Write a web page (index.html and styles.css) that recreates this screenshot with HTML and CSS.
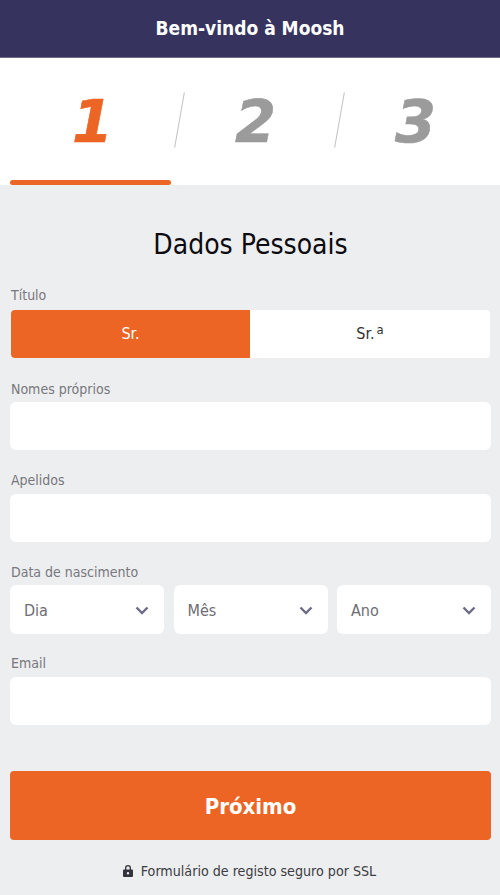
FILE: index.html
```html
<!DOCTYPE html>
<html lang="pt">
  <head>
    <meta charset="utf-8">
    <title>Moosh</title>
    <link rel="stylesheet" href="styles.css">
  </head>
  <body>
    <header class="topbar">Bem-vindo à Moosh</header>
    <nav class="steps">
      <div class="step active">1<span class="step-line"></span></div>
      <div class="step">2</div>
      <div class="step">3</div>
      <i class="slash slash-a"></i>
      <i class="slash slash-b"></i>
    </nav>
    <main class="form">
      <h1 class="form-title">Dados Pessoais</h1>
      <label class="label">Título</label>
      <div class="toggle">
        <div class="toggle-item on">Sr.</div>
        <div class="toggle-item">Sr.<sup>a</sup></div>
      </div>
      <label class="label label-name">Nomes próprios</label>
      <div class="input"></div>
      <label class="label">Apelidos</label>
      <div class="input"></div>
      <label class="label label-date">Data de nascimento</label>
      <div class="date-row">
        <div class="select">Dia
          <svg class="chev" width="14" height="9" viewBox="0 0 14 9"><path d="M1.5 1.5 7 7l5.5-5.5" fill="none" stroke="#6d6c86" stroke-width="2.4"/></svg>
        </div>
        <div class="select">Mês
          <svg class="chev" width="14" height="9" viewBox="0 0 14 9"><path d="M1.5 1.5 7 7l5.5-5.5" fill="none" stroke="#6d6c86" stroke-width="2.4"/></svg>
        </div>
        <div class="select">Ano
          <svg class="chev" width="14" height="9" viewBox="0 0 14 9"><path d="M1.5 1.5 7 7l5.5-5.5" fill="none" stroke="#6d6c86" stroke-width="2.4"/></svg>
        </div>
      </div>
      <label class="label label-email">Email</label>
      <div class="input"></div>
      <button class="next" type="button">Próximo</button>
      <p class="secure">
        <svg width="10" height="12" viewBox="0 0 10 12"><path d="M5 0a3 3 0 0 0-3 3v1.500H1a1 1 0 0 0-1 1V11a1 1 0 0 0 1 1h8a1 1 0 0 0 1-1V5.500a1 1 0 0 0-1-1H8V3a3 3 0 0 0-3-3Zm-1.700 3a1.700 1.700 0 0 1 3.400 0v1.500H3.300V3ZM5 7a1.200 1.200 0 1 1 0 2.400A1.200 1.200 0 0 1 5 7Z" fill="#33333b" fill-rule="evenodd"/></svg>
        Formulário de registo seguro por SSL
      </p>
    </main>
  </body>
</html>
```

FILE: styles.css
```css
*{
    box-sizing: border-box;
}
html,body{
    margin: 0;
    height: 895px;
    overflow: hidden;
}
body{
    background: #edeef0;
    font-family: "DejaVu Sans", sans-serif;
    font-stretch: condensed;
}
.topbar{
    height: 58px;
    background: #36345f;
    border-bottom: 1px solid #6b6a8a;
    color: #fff;
    font-size: 19px;
    font-weight: bold;
    line-height: 57px;
    text-align: center;
}
.steps{
    position: relative;
    display: grid;
    grid-template-columns: 160px 160px 160px;
    padding: 0 10px;
    height: 127px;
    background: #fff;
}
.step{
    position: relative;
    padding-top: 28px;
    padding-left: 11px;
    text-align: center;
    color: #9b9b9b;
    font-size: 59px;
    font-weight: bold;
    font-style: italic;
    font-stretch: normal;
    line-height: 72px;
    -webkit-text-stroke: 0.6px currentColor;
}
.step.active{
    padding-left: 5px;
    color: #ec6525;
}
.step-line{
    position: absolute;
    left: 0;
    right: -1px;
    bottom: 0;
    height: 5px;
    background: #ec6525;
    border-radius: 3px;
}
.slash{
    position: absolute;
    top: 34px;
    width: 1px;
    height: 56px;
    background: #c2c2c2;
    transform: rotate(10deg);
}
.slash-a{
    left: 179px;
}
.slash-b{
    left: 339px;
}
.form{
    padding: 0 9px 0 10px;
}
.form-title{
    margin: 40px 0 0;
    font-size: 28px;
    font-weight: normal;
    line-height: 40px;
    text-align: center;
    color: #0c0c10;
}
.label{
    display: block;
    margin-top: 23px;
    padding-left: 1px;
    height: 14px;
    font-size: 14px;
    line-height: 14px;
    color: #77777d;
}
.label-name{
    margin-top: 24px;
    margin-bottom: -1px;
}
.label-date{
    margin-bottom: -1px;
}
.label-email{
    margin-top: 22px;
}
.toggle{
    display: flex;
    margin: 8px 1px 0;
    height: 48px;
    background: #fff;
    border-radius: 4px;
    overflow: hidden;
    font-size: 16px;
}
.toggle-item{
    flex: 1;
    line-height: 48px;
    text-align: center;
    color: #333;
}
.toggle-item.on{
    flex: 0 0 239px;
    background: #ec6525;
    color: #fff;
}
.toggle-item sup{
    position: relative;
    top: 1px;
    font-size: 13px;
    line-height: 0;
    margin-left: 2px;
}
.input{
    margin-top: 7px;
    height: 48px;
    background: #fff;
    border-radius: 6px;
}
.date-row{
    display: grid;
    grid-template-columns: 154px 154px 154px;
    justify-content: space-between;
    margin-top: 7px;
}
.select{
    display: flex;
    justify-content: space-between;
    align-items: center;
    height: 49px;
    padding: 1px 15px 0 14px;
    background: #fff;
    border-radius: 6px;
    font-size: 16px;
    color: #6d6d73;
}
.next{
    display: block;
    width: 100%;
    height: 69px;
    margin-top: 46px;
    padding: 2px 0 0;
    border: 0;
    border-radius: 4px;
    background: #ec6525;
    color: #fff;
    font-family: inherit;
    font-stretch: condensed;
    font-size: 22px;
    font-weight: bold;
}
.secure{
    display: flex;
    justify-content: center;
    align-items: center;
    gap: 8px;
    margin: 22px 2px 0 0;
    font-size: 14.15px;
    line-height: 18px;
    color: #3c3c42;
}
```
